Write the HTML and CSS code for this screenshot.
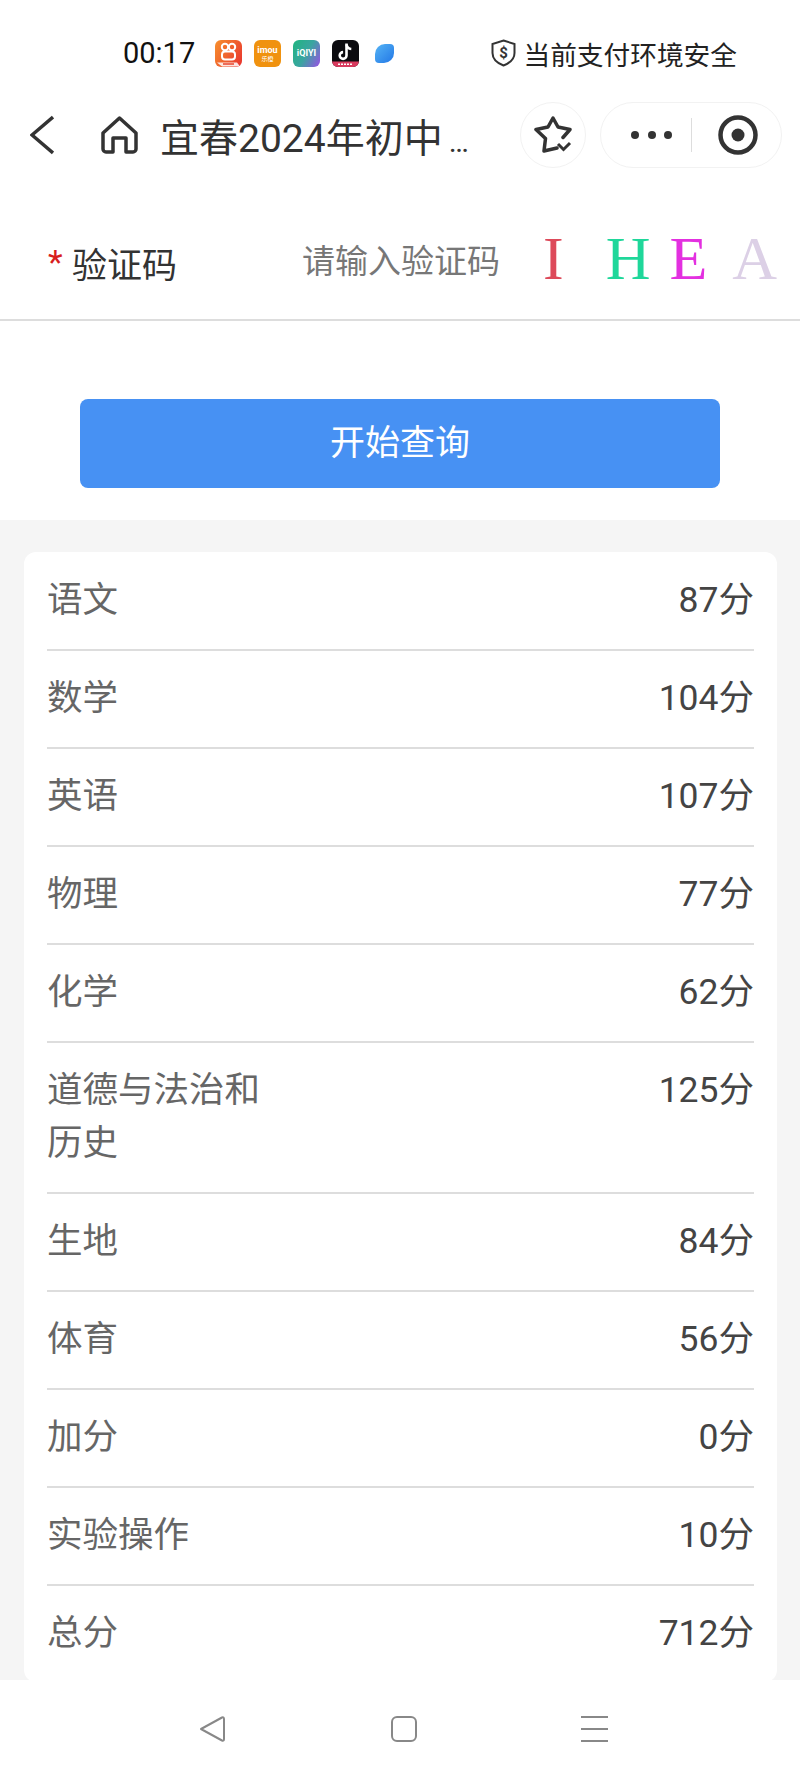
FILE: index.html
```html
<!DOCTYPE html>
<html>
<head>
  <title>成绩查询</title>
  <link rel="stylesheet" href="styles.css">
</head>
<body>
  <div class="page">
    <div class="status-bar">
      <span class="time">00:17</span>
      <div class="app-icons">
        <div class="app app-ks">
          <svg width="27" height="27" viewBox="0 0 27 27"><circle cx="10" cy="7" r="3.2" fill="none" stroke="#fff" stroke-width="2"/><circle cx="17" cy="7" r="3.2" fill="none" stroke="#fff" stroke-width="2"/><rect x="7" y="11.5" width="13" height="8" rx="3" fill="none" stroke="#fff" stroke-width="2"/><path d="M2 22.5h20l3 4H7z" fill="#fff" opacity=".85"/><path d="M8 24h11" stroke="#e8452c" stroke-width="1.5"/></svg>
        </div>
        <div class="app app-imou"><span class="app-word">imou</span><span class="app-sub">乐橙</span></div>
        <div class="app app-iqiyi"><span class="app-word">iQIYI</span></div>
        <div class="app app-tt">
          <svg width="27" height="27" viewBox="0 0 27 27"><path d="M14.5 3.5v12a3.4 3.4 0 1 1-3.4-3.4" fill="none" stroke="#fff" stroke-width="2.6"/><path d="M14.5 4.5c.5 2.800 2.300 4.300 4.800 4.500" fill="none" stroke="#fff" stroke-width="2.6"/><path d="M0 21.500h27v1.500a4 4 0 0 1-4 4H4a4 4 0 0 1-4-4z" fill="#d93a5e"/><path d="M6 24.300h14" stroke="#fff" stroke-width="1.500" stroke-dasharray="2 1"/></svg>
        </div>
        <div class="app-leaf"></div>
      </div>
      <div class="secure">
        <svg width="25" height="28" viewBox="0 0 25 28"><path d="M12.500 1.500 23.500 5v9c0 6-4.500 10-11 12.500C6 24 1.500 20 1.500 14V5z" fill="none" stroke="#333" stroke-width="2"/><text x="12.500" y="19" text-anchor="middle" class="shield-sign">$</text></svg>
        <span>当前支付环境安全</span>
      </div>
    </div>

    <div class="nav-bar">
      <svg class="back-icon" width="24" height="40" viewBox="0 0 24 40"><path d="M23 2 2 20l21 18" fill="none" stroke="#333" stroke-width="3.500"/></svg>
      <svg class="home-icon" width="37" height="38" viewBox="0 0 37 38"><path d="M2 17 18.500 2 35 17v16a3 3 0 0 1-3 3h-7V22H12v14H5a3 3 0 0 1-3-3z" fill="none" stroke="#333" stroke-width="3.500" stroke-linejoin="round"/></svg>
      <div class="nav-title">宜春2024年初中<span class="title-more">…</span></div>
      <div class="fav-btn">
        <svg width="38" height="38" viewBox="0 0 38 38"><path d="M23 32 10 35l1.500-12.500L2 13.500l12-2.500L19 2l5 9 12 2.500-7 8" fill="none" stroke="#333" stroke-width="3.500" stroke-linejoin="round" stroke-linecap="round"/><path d="M24 28l5.500 5.500L36 27" fill="none" stroke="#333" stroke-width="3"/></svg>
      </div>
      <div class="capsule">
        <div class="dots"><i></i><i></i><i></i></div>
        <div class="capsule-line"></div>
        <svg class="target" width="40" height="40" viewBox="0 0 40 40"><circle cx="20" cy="20" r="17.500" fill="none" stroke="#333" stroke-width="4.500"/><circle cx="20" cy="20" r="6.500" fill="#333"/></svg>
      </div>
    </div>

    <div class="code-row">
      <span class="required">*</span>
      <span class="code-label">验证码</span>
      <span class="code-input">请输入验证码</span>
      <div class="captcha">
        <span class="cap-i">I</span>
        <span class="cap-h">H</span>
        <span class="cap-e">E</span>
        <span class="cap-a">A</span>
      </div>
    </div>

    <div class="btn-wrap">
      <div class="query-btn">开始查询</div>
    </div>

    <div class="result-area">
      <div class="card">
        <div class="row"><div class="name">语文</div><div class="score">87分</div></div>
        <div class="row"><div class="name">数学</div><div class="score">104分</div></div>
        <div class="row"><div class="name">英语</div><div class="score">107分</div></div>
        <div class="row"><div class="name">物理</div><div class="score">77分</div></div>
        <div class="row"><div class="name">化学</div><div class="score">62分</div></div>
        <div class="row"><div class="name">道德与法治和历史</div><div class="score">125分</div></div>
        <div class="row"><div class="name">生地</div><div class="score">84分</div></div>
        <div class="row"><div class="name">体育</div><div class="score">56分</div></div>
        <div class="row"><div class="name">加分</div><div class="score">0分</div></div>
        <div class="row"><div class="name">实验操作</div><div class="score">10分</div></div>
        <div class="row last"><div class="name">总分</div><div class="score">712分</div></div>
      </div>
    </div>

    <div class="bottom-bar">
      <svg width="27" height="28" viewBox="0 0 27 28"><path d="M2 14 23 2.500q2-.8 2 1.500v20q0 2.300-2 1.500z" fill="none" stroke="#888" stroke-width="2" stroke-linejoin="round"/></svg>
      <div class="sys-home"></div>
      <div class="sys-menu"><i></i><i></i><i></i></div>
    </div>
  </div>
</body>
</html>
```
FILE: styles.css
```css
* {
  box-sizing: border-box;
}

body {
  margin: 0;
  background: #fff;
  font-family: Roboto, "Noto Sans CJK SC", sans-serif;
  color: #333;
}

.page {
  display: flex;
  flex-direction: column;
  height: 1778px;
  overflow: hidden;
}

/* status bar */
.status-bar {
  display: flex;
  align-items: center;
  height: 106px;
  padding: 0 63px 0 123px;
  flex-shrink: 0;
}

.time {
  width: 92px;
  font-size: 29px;
  color: #111;
}

.app-icons {
  display: flex;
  align-items: center;
  gap: 12px;
}

.app {
  display: flex;
  flex-direction: column;
  align-items: center;
  justify-content: center;
  width: 27px;
  height: 27px;
  border-radius: 6px;
  overflow: hidden;
  color: #fff;
}

.app-ks {
  background: linear-gradient(120deg, #f7912d, #e8322f);
}

.app-imou {
  background: #f0920f;
}

.app-iqiyi {
  background: linear-gradient(120deg, #1fb57f, #3aa5a0 50%, #9a4fe6);
}

.app-tt {
  background: #0b0b0f;
}

.app-word {
  font-size: 9px;
  line-height: 10px;
  font-weight: 700;
}

.app-sub {
  font-size: 6px;
  line-height: 7px;
}

.app-leaf {
  width: 19px;
  height: 19px;
  margin-left: 4px;
  border-radius: 10px 4px 10px 4px;
  background: linear-gradient(135deg, #55b4f5, #2277e6);
}

.secure {
  display: flex;
  align-items: center;
  gap: 8px;
  margin-left: auto;
  font-size: 26.700px;
  color: #222;
}

.shield-sign {
  font-size: 15px;
  font-weight: 700;
  fill: #333;
}

/* title bar */
.nav-bar {
  display: flex;
  align-items: center;
  height: 58px;
  padding-left: 30px;
  flex-shrink: 0;
}

.home-icon {
  margin-left: 47px;
}

.nav-title {
  width: 360px;
  margin-left: 22px;
  font-size: 39px;
  white-space: nowrap;
}

.title-more {
  margin-left: 6px;
  font-size: 30px;
}

.fav-btn {
  display: flex;
  align-items: center;
  justify-content: center;
  width: 66px;
  height: 66px;
  border: 1px solid #f2f2f2;
  border-radius: 50%;
}

.capsule {
  display: flex;
  align-items: center;
  width: 182px;
  height: 66px;
  margin-left: 14px;
  padding-left: 30px;
  border: 1px solid #f2f2f2;
  border-radius: 33px;
}

.dots {
  display: flex;
  gap: 8.500px;
}

.dots i {
  width: 8px;
  height: 8px;
  border-radius: 50%;
  background: #333;
}

.capsule-line {
  width: 1px;
  height: 34px;
  margin: 0 26px 0 19px;
  background: #ddd;
}

/* captcha row */
.code-row {
  display: flex;
  align-items: center;
  height: 132px;
  margin-top: 25px;
  padding: 16px 0 0 48px;
  border-bottom: 2px solid #ddd;
  flex-shrink: 0;
}

.required {
  width: 24px;
  font-size: 34px;
  color: #d81e1e;
}

.code-label {
  width: 230px;
  font-size: 35px;
  color: #333;
}

.code-input {
  width: 241px;
  margin-top: -6px;
  font-size: 33px;
  color: #777;
}

.captcha {
  display: flex;
  margin-top: -8px;
  font-family: "Liberation Serif", serif;
  font-size: 62px;
  line-height: 62px;
  filter: blur(0.6px);
}

.cap-i {
  color: #dd4a5a;
}

.cap-h {
  margin-left: 42px;
  color: #1fd79a;
}

.cap-e {
  margin-left: 19px;
  color: #e330e0;
}

.cap-a {
  margin-left: 25px;
  color: #dcd0e6;
}

/* button */
.btn-wrap {
  height: 199px;
  padding: 78px 80px 0;
  flex-shrink: 0;
}

.query-btn {
  height: 89px;
  border-radius: 8px;
  background: #4791f3;
  color: #fff;
  font-size: 35px;
  line-height: 89px;
  text-align: center;
}

/* scores */
.result-area {
  flex: 1;
  min-height: 0;
  padding: 32px 23px 0 24px;
  background: #f5f5f5;
  overflow: hidden;
}

.card {
  padding: 1px 23px 0;
  background: #fff;
  border-radius: 12px;
}

.row {
  display: flex;
  justify-content: space-between;
  padding: 21px 0 22px;
  border-bottom: 2px solid #ddd;
  font-size: 35.500px;
  line-height: 53px;
}

.row.last {
  border-bottom: 0;
}

.name {
  width: 215px;
  color: #666;
}

.score {
  color: #444;
}

/* android nav */
.bottom-bar {
  display: flex;
  align-items: center;
  height: 98px;
  padding-left: 199px;
  background: #fff;
  flex-shrink: 0;
}

.sys-home {
  width: 26px;
  height: 26px;
  margin-left: 165px;
  border: 2px solid #888;
  border-radius: 6px;
}

.sys-menu {
  display: flex;
  flex-direction: column;
  gap: 10px;
  width: 27px;
  margin-left: 164px;
}

.sys-menu i {
  height: 2px;
  background: #888;
}
```
